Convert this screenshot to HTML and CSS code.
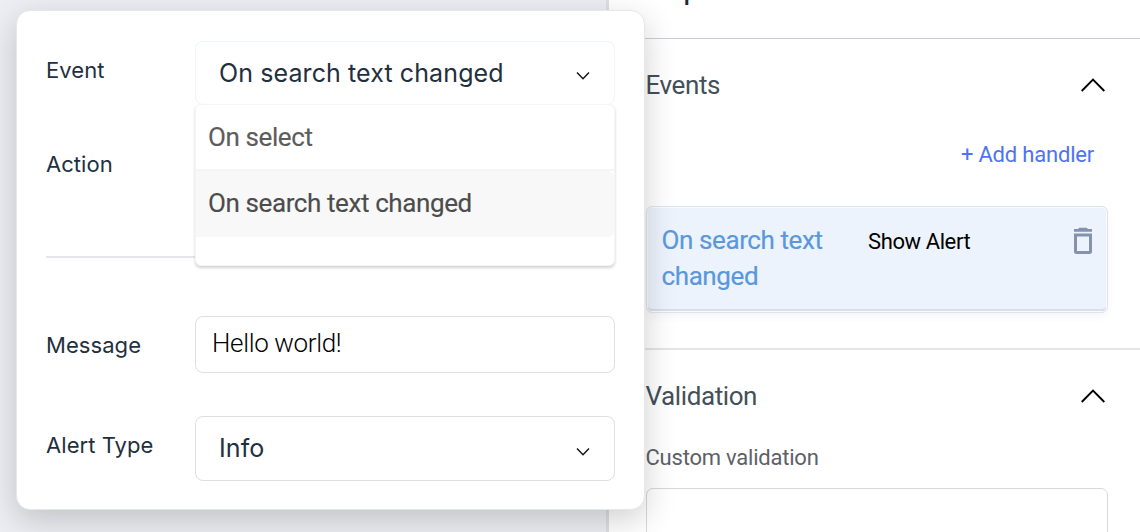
FILE: index.html
```
<!DOCTYPE html>
<html lang="en">
<head>
<meta charset="utf-8">
<title>Event handlers</title>
<link rel="stylesheet" href="styles.css">
</head>
<body>
<div class="editor">
  <div class="canvas"></div>
  <aside class="inspector">
    <header class="inspector-head">Properties</header>
    <section class="section events">
      <div class="section-head"><h2>Events</h2>
        <svg class="chevron-up" viewBox="0 0 26 16"><path d="M1.700 14 13 2.700 24.300 14"/></svg>
      </div>
      <a class="add">+ Add handler</a>
      <div class="handler">
        <span class="handler-event">On search text changed</span>
        <span class="handler-action">Show Alert</span>
        <svg class="trash" viewBox="0 0 18 28"><path class="lid" d="M0 2h4l1.300-1.300h7.400L14 2h4v2.700H0z"/><path class="can" d="M1.500 8h15v16.500q0 1-1 1h-13q-1 0-1-1z"/></svg>
      </div>
    </section>
    <section class="section validation">
      <div class="section-head"><h2>Validation</h2>
        <svg class="chevron-up" viewBox="0 0 26 16"><path d="M1.700 14 13 2.700 24.300 14"/></svg>
      </div>
      <label class="caption">Custom validation</label>
      <div class="code-box"></div>
    </section>
  </aside>
</div>
<div class="popover">
  <div class="row event-row">
    <span class="label">Event</span>
    <div class="select focused"><span class="event-value">On search text changed</span>
      <svg class="chevron-down" viewBox="0 0 16 10"><path d="M2 1.500 8 7.700 14 1.500"/></svg>
      <div class="menu">
        <div class="option">On select</div>
        <div class="option active">On search text changed</div>
      </div>
    </div>
  </div>
  <div class="row action-row"><span class="label action-label">Action</span></div>
  <div class="divider"></div>
  <div class="row message-row">
    <span class="label message-label">Message</span>
    <div class="input">Hello world!</div>
  </div>
  <div class="row type-row">
    <span class="label type-label">Alert Type</span>
    <div class="select"><span class="type-value">Info</span>
      <svg class="chevron-down" viewBox="0 0 16 10"><path d="M2 1.500 8 7.700 14 1.500"/></svg>
    </div>
  </div>
</div>
</body>
</html>
```
FILE: styles.css
```
* { box-sizing: border-box; }
body { margin: 0; width: 1140px; height: 532px; overflow: hidden; position: relative; font-family: Roboto, sans-serif; background: #fff; }
.editor { display: flex; height: 532px; overflow: hidden; }
.canvas { width: 609px; flex: none; background: #edeef3; border-right: 3px solid #dedfe1; }
.inspector { flex: 1; background: #fff; overflow: hidden; }
.inspector-head { height: 62px; margin-top: -23px; border-bottom: 1px solid #cccdd3; padding-left: 36px; font-size: 25px; font-weight: 500; line-height: 30px; color: #1f2937; }
.section { padding: 0 32px 0 36.500px; }
.section-head { display: flex; justify-content: space-between; align-items: center; height: 30px; }
.section-head h2 { margin: 0; font-size: 26px; font-weight: 400; line-height: 30px; letter-spacing: -.4px; color: #435059; }
.chevron-up { width: 26px; height: 16px; margin-right: 2px; fill: none; stroke: #000; stroke-width: 1.900; }
.events { height: 311px; padding-top: 31px; border-bottom: 2px solid #e5e5e5; }
.add { display: block; margin: 40px 14px 0 0; text-align: right; font-size: 22px; line-height: 30px; letter-spacing: -.2px; color: #4d72f7; }
.handler { display: flex; height: 107px; margin: 36px 0 0 .5px; padding: 15px 14px 0 14.500px; border: 1px solid #e1e5ea; border-radius: 6px; background: #edf3fc; box-shadow: inset 0 0 0 1px #f9fbff, inset 0 -3px 0 #d6dfea, 0 4px 8px rgba(0,0,0,.04); }
.handler-event { width: 206.500px; font-size: 26px; line-height: 36px; letter-spacing: -.4px; color: #5a98de; padding-right: 30px; -webkit-text-stroke: .2px #5a98de; }
.handler-action { font-size: 22px; line-height: 40px; letter-spacing: -.4px; color: #000; }
.trash { width: 20px; height: 28px; margin: 5px 0 0 auto; }
.trash .lid { fill: #8492af; }
.trash .can { fill: none; stroke: #8492af; stroke-width: 3; }
.validation { padding-top: 31px; }
.caption { display: block; margin-top: 32px; font-size: 22px; line-height: 30px; letter-spacing: -.22px; color: #5d6066; }
.code-box { height: 80px; margin: 15px 0 0 .5px; border: 1px solid #d7d8da; border-radius: 7px; }
.popover { position: absolute; left: 16px; top: 10px; width: 629px; height: 500px; padding: 30px 29px 0; border: 1px solid #e6e7e9; border-radius: 14px; background: #fff; box-shadow: 0 10px 32px rgba(0,0,0,.19); }
.row { display: flex; align-items: flex-start; }
.label { width: 149px; padding-top: 14px; font-family: Inter, sans-serif; font-size: 22px; line-height: 30px; color: #222f3e; letter-spacing: .06px; }
.select, .input { width: 420px; border: 1px solid #dedfe1; border-radius: 8px; background: #fff; }
.select { position: relative; display: flex; justify-content: space-between; align-items: center; height: 65px; padding: 0 23px; font-family: Inter, sans-serif; font-size: 25px; letter-spacing: .1px; color: #222f3e; }
.select.focused { height: 64px; border-color: #eff5fc; }
.chevron-down { width: 16px; height: 10px; margin-top: 6px; fill: none; stroke: #111; stroke-width: 1.400; }
.type-value { margin-top: -2px; }
.menu { position: absolute; z-index: 2; left: -1px; top: 62px; width: 420px; height: 162px; border-radius: 6px; background: #fff; border: 1px solid #f5f5f5; box-shadow: 0 2px 3px rgba(0,0,0,.18); font-family: Roboto, sans-serif; font-size: 26px; letter-spacing: -.4px; color: #5c5c5c; -webkit-text-stroke: .15px currentColor; }
.option { height: 66px; padding: 0 12px; line-height: 64px; border-bottom: 2px solid #f5f5f5; }
.option.active { background: #f8f8f8; color: #4c4c4c; border: 0; border-radius: 0 6px 6px 0; }
.action-row { margin-top: 30px; height: 121px; }
.divider { height: 2px; background: #e5e6e9; }
.message-row { margin-top: 58px; }
.input { height: 57px; padding-left: 16px; font-size: 26px; font-weight: 300; line-height: 52px; letter-spacing: -.35px; color: #000; }
.type-row { margin-top: 43px; }
```
